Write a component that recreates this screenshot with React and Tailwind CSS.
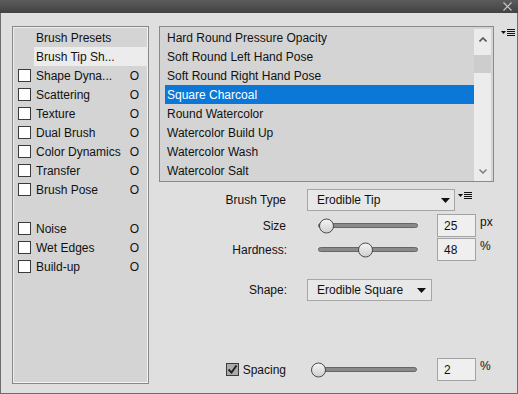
import { useState } from "react";

const font = { fontFamily: '"Liberation Sans", Arial, sans-serif' };

const leftItems = [
  { label: "Brush Presets", check: false },
  { label: "Brush Tip Sh...", check: false, active: true },
  { label: "Shape Dyna...", check: true, lock: true },
  { label: "Scattering", check: true, lock: true },
  { label: "Texture", check: true, lock: true },
  { label: "Dual Brush", check: true, lock: true },
  { label: "Color Dynamics", check: true, lock: true },
  { label: "Transfer", check: true, lock: true },
  { label: "Brush Pose", check: true, lock: true },
  null,
  { label: "Noise", check: true, lock: true },
  { label: "Wet Edges", check: true, lock: true },
  { label: "Build-up", check: true, lock: true },
];

const brushes = [
  "Hard Round Pressure Opacity",
  "Soft Round Left Hand Pose",
  "Soft Round Right Hand Pose",
  "Square Charcoal",
  "Round Watercolor",
  "Watercolor Build Up",
  "Watercolor Wash",
  "Watercolor Salt",
];

const MenuIcon = ({ className }) => (
  <svg width="14" height="8" viewBox="0 0 14 8" className={className}>
    <path d="M0 2h5l-2.5 3z" fill="#111" />
    <path d="M6 0.5h8M6 2.5h8M6 4.5h8M6 6.5h8" stroke="#111" strokeWidth="1" />
  </svg>
);

const Arrow = () => (
  <svg width="9" height="5" viewBox="0 0 9 5">
    <path d="M0 0h9l-4.5 5z" fill="#111" />
  </svg>
);

const Slider = ({ trackClass, thumbClass }) => (
  <div className="relative w-[130px] h-[23px] flex items-center">
    <div className={`h-[5px] rounded-full bg-[#8a8a8a] border border-[#666] ${trackClass}`} />
    <div
      className={`absolute top-1/2 -translate-y-1/2 w-[15px] h-[15px] rounded-full border border-[#4a4a4a] bg-gradient-to-b from-[#f4f4f4] to-[#d0d0d0] ${thumbClass}`}
    />
  </div>
);

const NumBox = ({ value, unit }) => (
  <div className="flex items-start">
    <div className="w-[39px] h-[23px] bg-[#efefef] border border-[#a3a3a3] pl-[6px] flex items-center text-[12px] text-[#111]">
      {value}
    </div>
    <span className="ml-[4px] -mt-[1px] text-[12px] text-[#111]">{unit}</span>
  </div>
);

export default function App() {
  const [selected, setSelected] = useState(3);
  const [spacing, setSpacing] = useState(true);

  return (
    <div style={font} className="w-[518px] h-[394px] flex flex-col bg-[#dfdfdf] text-[12px] text-[#111] select-none">
      {/* title bar */}
      <div className="h-[13px] bg-gradient-to-b from-[#5c5c5c] to-[#424242] flex items-center justify-end pr-[6px]">
        <svg width="9" height="9" viewBox="0 0 9 9">
          <path d="M0.5 0.5l8 8M8.5 0.5l-8 8" stroke="#c8c8c8" strokeWidth="1.2" />
        </svg>
      </div>

      <div className="flex-1 flex border-x border-b border-[#6e6e6e] pl-[11px] pt-[13px]">
        {/* left panel */}
        <div className="w-[137px] h-[358px] border border-[#88888c] bg-[#d4d4d4] shadow-[inset_1px_1px_0_#ececec,inset_-1px_-1px_0_#f4f4f4] pt-[1px]">
          {leftItems.map((item, i) =>
            item ? (
              <div key={i} className="h-[19px] flex items-center pl-[5px]">
                <div
                  className={`w-[13px] h-[13px] shrink-0 ${item.check ? "bg-white border border-[#3a3a3a]" : ""}`}
                />
                <div
                  className={`ml-[3px] flex-1 h-[19px] flex items-center pl-[2px] ${item.active ? "bg-[#ececec]" : ""}`}
                >
                  <span className="flex-1 whitespace-nowrap">{item.label}</span>
                  {item.lock && <span className="mr-[9px]">O</span>}
                </div>
              </div>
            ) : (
              <div key={i} className="h-[20px]" />
            )
          )}
        </div>

        {/* right column */}
        <div className="ml-[10px] flex flex-col">
          <div className="flex items-start">
            <div className="w-[335px] h-[156px] border border-[#8a8a8e] bg-[#d4d4d4] flex pl-[5px] pt-[1px]">
              <div className="flex-1">
                {brushes.map((b, i) => (
                  <div
                    key={b}
                    onClick={() => setSelected(i)}
                    className={`h-[19px] flex items-center pl-[2px] whitespace-nowrap ${
                      selected === i ? "bg-[#0b78d7] text-white" : ""
                    }`}
                  >
                    {b}
                  </div>
                ))}
              </div>
              <div className="w-[17px] h-[152px] mt-[1px] mr-[2px] bg-[#ececec] flex flex-col items-center">
                <svg width="8" height="5" viewBox="0 0 8 5" className="mt-[8px]">
                  <path d="M0.5 4.5l3.5-3.5 3.5 3.5" stroke="#555" strokeWidth="1.6" fill="none" />
                </svg>
                <div className="w-[17px] h-[18px] mt-[13px] bg-[#cdcdcd]" />
                <div className="flex-1" />
                <svg width="8" height="5" viewBox="0 0 8 5" className="mb-[7px]">
                  <path d="M0.5 0.5l3.5 3.5 3.5-3.5" stroke="#777" strokeWidth="1.4" fill="none" />
                </svg>
              </div>
            </div>
            <MenuIcon className="ml-[7px] mt-[3px]" />
          </div>

          {/* brush type */}
          <div className="flex items-center mt-[7px] h-[22px]">
            <div className="w-[128px] text-right pr-[1px]">Brush Type</div>
            <div className="ml-[20px] w-[148px] h-[22px] bg-[#e8e8e8] border border-[#a6a6a6] flex items-center pl-[9px] pr-[4px]">
              <span className="flex-1">Erodible Tip</span>
              <Arrow />
            </div>
            <MenuIcon className="ml-[3px] -mt-[9px]" />
          </div>

          {/* size */}
          <div className="flex items-center mt-[3px]">
            <div className="w-[128px] text-right pr-[1px]">Size</div>
            <div className="ml-[20px]">
              <Slider trackClass="ml-[11px] w-[100px]" thumbClass="left-[12px]" />
            </div>
            <NumBox value="25" unit="px" />
          </div>

          {/* hardness */}
          <div className="flex items-center mt-[1px]">
            <div className="w-[128px] text-right">Hardness:</div>
            <div className="ml-[20px]">
              <Slider trackClass="ml-[11px] w-[100px]" thumbClass="left-[51px]" />
            </div>
            <NumBox value="48" unit="%" />
          </div>

          {/* shape */}
          <div className="flex items-center mt-[18px] h-[22px]">
            <div className="w-[128px] text-right">Shape:</div>
            <div className="ml-[20px] w-[125px] h-[22px] bg-[#e8e8e8] border border-[#a6a6a6] flex items-center pl-[9px] pr-[5px]">
              <span className="flex-1">Erodible Square</span>
              <Arrow />
            </div>
          </div>

          {/* spacing */}
          <div className="flex items-center mt-[57px]">
            <div className="w-[128px] flex items-center justify-end pr-[1px]">
              <div
                onClick={() => setSpacing(!spacing)}
                className="w-[13px] h-[13px] border border-[#3a3a3a] bg-[#ababab] flex items-center justify-center"
              >
                {spacing && (
                  <svg width="11" height="11" viewBox="0 0 11 11">
                    <path d="M1.5 5.5l3 3 5-7" stroke="#222" strokeWidth="2" fill="none" />
                  </svg>
                )}
              </div>
              <span className="ml-[4px]">Spacing</span>
            </div>
            <div className="ml-[20px]">
              <Slider trackClass="ml-[5px] w-[105px]" thumbClass="left-[4px]" />
            </div>
            <NumBox value="2" unit="%" />
          </div>
        </div>
      </div>
    </div>
  );
}
